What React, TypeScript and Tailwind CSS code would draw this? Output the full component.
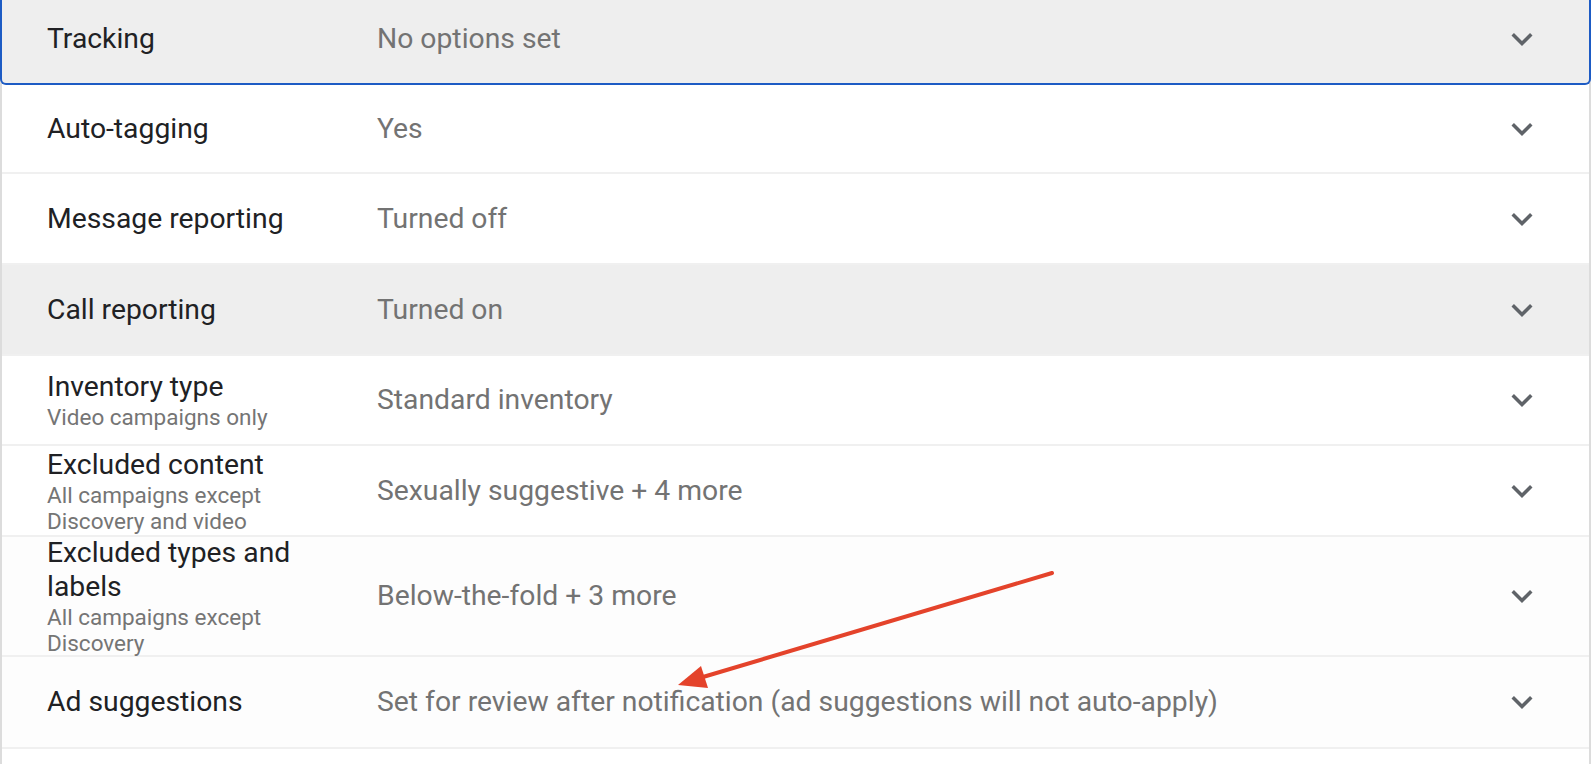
import React from "react";

type Setting = {
  label: string;
  sub?: string;
  value: string;
  rowClass: string;
};

const settings: Setting[] = [
  { label: "Auto-tagging", value: "Yes", rowClass: "h-[89px] bg-white" },
  { label: "Message reporting", value: "Turned off", rowClass: "h-[91px] bg-white" },
  { label: "Call reporting", value: "Turned on", rowClass: "h-[91px] bg-[#eeeeee]" },
  { label: "Inventory type", sub: "Video campaigns only", value: "Standard inventory", rowClass: "h-[90px] bg-white" },
  {
    label: "Excluded content",
    sub: "All campaigns except Discovery and video",
    value: "Sexually suggestive + 4 more",
    rowClass: "h-[91px] bg-white",
  },
  {
    label: "Excluded types and labels",
    sub: "All campaigns except Discovery",
    value: "Below-the-fold + 3 more",
    rowClass: "h-[120px] bg-[#fdfdfd]",
  },
  {
    label: "Ad suggestions",
    value: "Set for review after notification (ad suggestions will not auto-apply)",
    rowClass: "h-[92px] bg-[#fdfdfd]",
  },
  { label: "", value: "", rowClass: "h-[91px] bg-white" },
];

function Chevron() {
  return (
    <svg width="42" height="42" viewBox="0 0 24 24" fill="#5f6368">
      <path d="M16.59 8.59L12 13.17 7.41 8.59 6 10l6 6 6-6z" />
    </svg>
  );
}

function SettingRow({ s }: { s: Setting }) {
  return (
    <div className={`flex items-center border-b-2 border-[#f0f0f0] pl-[45px] pr-[46px] ${s.rowClass}`}>
      <div className="w-[290px] mr-[40px] shrink-0">
        <div className="text-[28.3px] leading-[34px] text-[#202124]">{s.label}</div>
        {s.sub && <div className="text-[22.5px] leading-[26px] text-[#757575]">{s.sub}</div>}
      </div>
      <div className="flex-1 text-[28.3px] leading-[34px] text-[#737373]">{s.value}</div>
      {s.label && <Chevron />}
    </div>
  );
}

export default function App() {
  return (
    <div
      className="relative w-[1596px] h-[764px] overflow-hidden bg-white"
      style={{ fontFamily: "Roboto, 'Noto Sans', sans-serif" }}
    >
      <div className="w-[1591px] h-full border-x-2 border-[#dcdcdc]">
        {/* Focused row */}
        <div className="-mx-[2px] flex items-center h-[85px] pb-[6px] pl-[45px] pr-[46px] bg-[#eeeeee] border-2 border-t-0 border-[#1d5bc4] rounded-b-[6px]">
          <div className="w-[290px] mr-[40px] shrink-0 text-[28.3px] leading-[34px] text-[#202124]">Tracking</div>
          <div className="flex-1 text-[28.3px] leading-[34px] text-[#737373]">No options set</div>
          <Chevron />
        </div>

        {settings.map((s, i) => (
          <SettingRow key={i} s={s} />
        ))}
      </div>

      {/* Annotation arrow */}
      <svg className="absolute left-0 top-0 pointer-events-none" width="1596" height="764">
        <line x1="1052" y1="573" x2="703" y2="677" stroke="#e4432b" strokeWidth="4" strokeLinecap="round" />
        <polygon points="678,685 708,688 701,666" fill="#e4432b" />
      </svg>
    </div>
  );
}
